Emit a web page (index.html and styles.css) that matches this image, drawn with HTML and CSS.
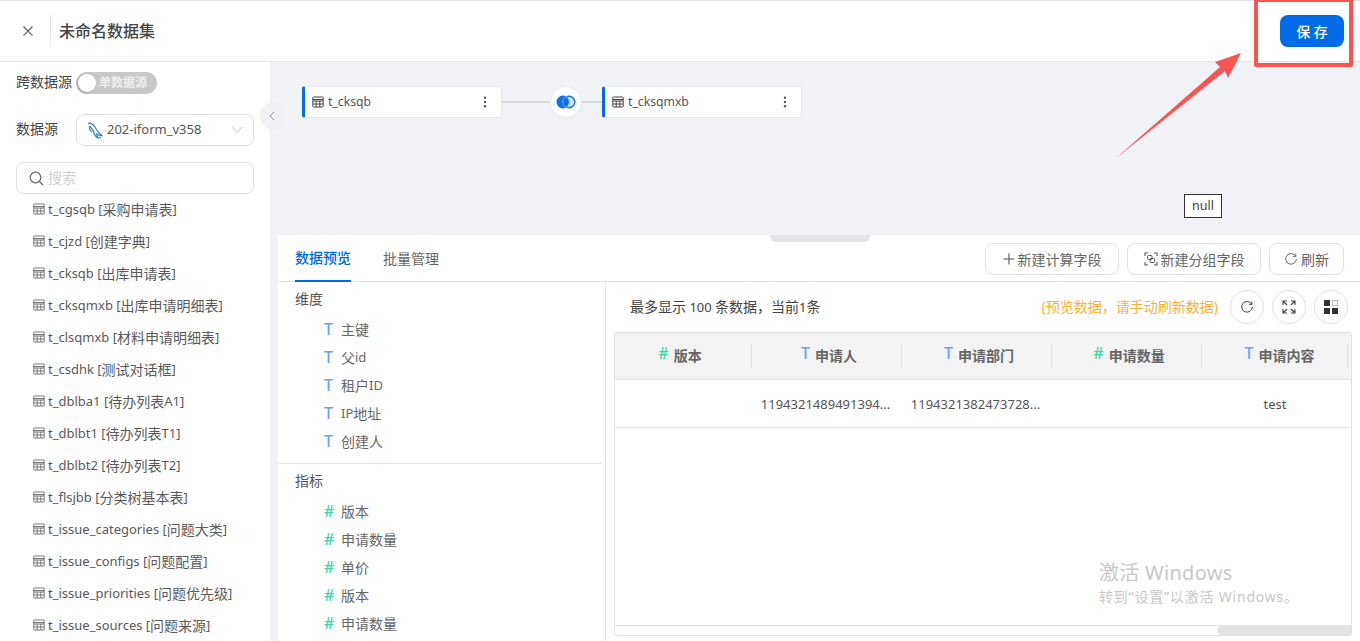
FILE: index.html
```html
<!DOCTYPE html>
<html lang="en">

<head>
    <meta charset="UTF-8" />
    <meta name="viewport" content="width=device-width, initial-scale=1.0" />
    <title>未命名数据集</title>
    <link rel="stylesheet" href="styles.css">
</head>

<body>
    <svg width="0" height="0" class="defs">
        <symbol id="tbl" viewBox="0 0 12 12">
            <path d="M1.500 1h9a.7.7 0 0 1 .7.7v8.600a.7.7 0 0 1-.7.7h-9a.7.7 0 0 1-.7-.7V1.700a.7.7 0 0 1 .7-.7zM1 3.500h10M1 5h10M1 8h10M4.200 5v6M7.800 5v6" fill="none" stroke="currentColor" stroke-width="1" />
        </symbol>
        <symbol id="dots" viewBox="0 0 4 14">
            <circle cx="2" cy="2" r="1.400" fill="currentColor" />
            <circle cx="2" cy="7" r="1.400" fill="currentColor" />
            <circle cx="2" cy="12" r="1.400" fill="currentColor" />
        </symbol>
        <symbol id="reload" viewBox="0 0 14 14">
            <path d="M11.600 4.200A5.300 5.300 0 1 0 12.300 7M11.800 1.500v2.900H8.900" fill="none" stroke="currentColor" stroke-width="1" />
        </symbol>
    </svg>

    <div class="app">
        <header class="top">
            <button class="close">
                <svg width="12" height="12" viewBox="0 0 12 12">
                    <path d="M1.500 1.500l9 9M10.500 1.500l-9 9" stroke="#666" stroke-width="1.100" fill="none" />
                </svg>
            </button>
            <h1 class="title">未命名数据集</h1>
            <button class="save">保 存</button>
        </header>

        <div class="body">
            <aside class="side">
                <div class="side-row row-cross">
                    <span class="side-label">跨数据源</span>
                    <span class="switch"><i class="knob"></i>单数据源</span>
                </div>
                <div class="side-row row-source">
                    <span class="side-label label-source">数据源</span>
                    <div class="select">
                        <svg class="dolphin" width="17" height="17" viewBox="0 0 16 16">
                            <path d="M1 1c3.500 0 6 2 7.300 5 1 2.200 2.500 4.800 6.200 7.200-2.200-.3-4-.9-5.300-2 .1 1.400.5 2.700 1.100 3.800-2.400-1.400-3.500-3.200-4-5.600C5.800 6.500 3.200 5.300 2.300 3.800" fill="none" stroke="#2a7cc0" stroke-width="1.100" />
                            <path d="M2.300 3.800C2 6 2.800 8 4.500 9.500M11.500 14l1.500 1" fill="none" stroke="#2a7cc0" stroke-width="1" />
                        </svg>
                        <span class="en">202-iform_v358</span>
                        <svg class="caret" width="12" height="8" viewBox="0 0 12 8">
                            <path d="M1 1l5 5.500L11 1" fill="none" stroke="#ccc" stroke-width="1" />
                        </svg>
                    </div>
                </div>
                <div class="search">
                    <svg width="15" height="15" viewBox="0 0 15 15">
                        <circle cx="6.500" cy="6.500" r="5.300" fill="none" stroke="#666" stroke-width="1.200" />
                        <path d="M10.500 10.500l3.500 3.500" stroke="#666" stroke-width="1.200" />
                    </svg>
                    <span>搜索</span>
                </div>
                <ul class="tables">
                    <li><svg><use href="#tbl" /></svg><span class="en">t_cgsqb [</span>采购申请表<span class="en">]</span></li>
                    <li><svg><use href="#tbl" /></svg><span class="en">t_cjzd [</span>创建字典<span class="en">]</span></li>
                    <li><svg><use href="#tbl" /></svg><span class="en">t_cksqb [</span>出库申请表<span class="en">]</span></li>
                    <li><svg><use href="#tbl" /></svg><span class="en">t_cksqmxb [</span>出库申请明细表<span class="en">]</span></li>
                    <li><svg><use href="#tbl" /></svg><span class="en">t_clsqmxb [</span>材料申请明细表<span class="en">]</span></li>
                    <li><svg><use href="#tbl" /></svg><span class="en">t_csdhk [</span>测试对话框<span class="en">]</span></li>
                    <li><svg><use href="#tbl" /></svg><span class="en">t_dblba1 [</span>待办列表<span class="en">A1]</span></li>
                    <li><svg><use href="#tbl" /></svg><span class="en">t_dblbt1 [</span>待办列表<span class="en">T1]</span></li>
                    <li><svg><use href="#tbl" /></svg><span class="en">t_dblbt2 [</span>待办列表<span class="en">T2]</span></li>
                    <li><svg><use href="#tbl" /></svg><span class="en">t_flsjbb [</span>分类树基本表<span class="en">]</span></li>
                    <li><svg><use href="#tbl" /></svg><span class="en">t_issue_categories [</span>问题大类<span class="en">]</span></li>
                    <li><svg><use href="#tbl" /></svg><span class="en">t_issue_configs [</span>问题配置<span class="en">]</span></li>
                    <li><svg><use href="#tbl" /></svg><span class="en">t_issue_priorities [</span>问题优先级<span class="en">]</span></li>
                    <li><svg><use href="#tbl" /></svg><span class="en">t_issue_sources [</span>问题来源<span class="en">]</span></li>
                </ul>
            </aside>

            <main class="main">
                <button class="fold">
                    <svg width="6" height="10" viewBox="0 0 6 10">
                        <path d="M5 1L1 5l4 4" fill="none" stroke="#888" stroke-width="1" />
                    </svg>
                </button>

                <section class="canvas">
                    <div class="node">
                        <svg class="node-icon"><use href="#tbl" /></svg>
                        <span class="node-name">t_cksqb</span>
                        <svg class="node-more"><use href="#dots" /></svg>
                    </div>
                    <i class="link link-a"></i>
                    <span class="join">
                        <svg width="20" height="16" viewBox="0 0 20 16">
                            <circle cx="13" cy="8" r="5.800" fill="#d6e6fb" stroke="#0f6fe6" stroke-width="1.400" />
                            <circle cx="7" cy="8" r="6.500" fill="#0f6fe6" />
                            <path d="M10 2.300a6.500 6.500 0 0 0 0 11.400" fill="none" stroke="#7fb2f2" stroke-width=".8" />
                            <path d="M10 2.300a6.500 6.500 0 0 1 0 11.400" fill="none" stroke="#b5d2f8" stroke-width=".8" />
                        </svg>
                    </span>
                    <i class="link link-b"></i>
                    <div class="node">
                        <svg class="node-icon"><use href="#tbl" /></svg>
                        <span class="node-name">t_cksqmxb</span>
                        <svg class="node-more"><use href="#dots" /></svg>
                    </div>
                    <span class="null-tip">null</span>
                </section>

                <section class="panel">
                    <i class="drag"></i>
                    <div class="tabbar">
                        <a class="tab active">数据预览</a>
                        <a class="tab">批量管理</a>
                        <div class="actions">
                            <button class="btn btn-wide">
                                <svg width="12" height="12" viewBox="0 0 12 12">
                                    <path d="M6 .5v11M.5 6h11" stroke="#555" stroke-width="1.100" />
                                </svg>新建计算字段
                            </button>
                            <button class="btn btn-wide">
                                <svg width="14" height="14" viewBox="0 0 14 14">
                                    <path d="M1 4V1h3M10 1h3v3M13 10v3h-3M4 13H1v-3" fill="none" stroke="#555" stroke-width="1.100" />
                                    <rect x="3.500" y="3.500" width="4.500" height="4" rx="1" fill="none" stroke="#555" />
                                    <rect x="6" y="6.500" width="4.500" height="4" rx="1" fill="none" stroke="#555" />
                                </svg>新建分组字段
                            </button>
                            <button class="btn btn-small">
                                <svg width="14" height="14"><use href="#reload" /></svg>刷新
                            </button>
                        </div>
                    </div>

                    <div class="panel-body">
                        <div class="fields">
                            <div class="group">
                                <h3 class="group-title">维度</h3>
                                <div class="field"><b class="t">T</b>主键</div>
                                <div class="field"><b class="t">T</b>父<span class="en">id</span></div>
                                <div class="field"><b class="t">T</b>租户<span class="en">ID</span></div>
                                <div class="field"><b class="t">T</b><span class="en">IP</span>地址</div>
                                <div class="field"><b class="t">T</b>创建人</div>
                            </div>
                            <div class="group group-last">
                                <h3 class="group-title">指标</h3>
                                <div class="field"><b class="n">#</b>版本</div>
                                <div class="field"><b class="n">#</b>申请数量</div>
                                <div class="field"><b class="n">#</b>单价</div>
                                <div class="field"><b class="n">#</b>版本</div>
                                <div class="field"><b class="n">#</b>申请数量</div>
                            </div>
                        </div>

                        <div class="preview">
                            <div class="preview-bar">
                                <span class="count">最多显示<span class="en"> 100 </span>条数据，当前<span class="en">1</span>条</span>
                                <span class="hint">(预览数据，请手动刷新数据)</span>
                                <button class="round">
                                    <svg width="14" height="14"><use href="#reload" /></svg>
                                </button>
                                <button class="round">
                                    <svg width="14" height="14" viewBox="0 0 14 14">
                                        <path d="M1 5V1h4M9 1h4v4M13 9v4H9M5 13H1V9M1 1l4 4M13 1L9 5M13 13L9 9M1 13l4-4" fill="none" stroke="#444" stroke-width="1.100" />
                                    </svg>
                                </button>
                                <button class="round">
                                    <svg width="14" height="14" viewBox="0 0 14 14">
                                        <path d="M0 0h6v6H0zM0 8h6v6H0zM8 8h6v6H8z" fill="#333" />
                                        <path d="M8.500.5h5v5h-5z" fill="none" stroke="#777" stroke-dasharray="1 1" />
                                    </svg>
                                </button>
                            </div>

                            <div class="table">
                                <div class="thead">
                                    <div class="th first"><b class="n">#</b>版本</div>
                                    <div class="th"><b class="t">T</b>申请人</div>
                                    <div class="th"><b class="t">T</b>申请部门</div>
                                    <div class="th"><b class="n">#</b>申请数量</div>
                                    <div class="th last"><b class="t">T</b>申请内容</div>
                                </div>
                                <div class="trow">
                                    <div class="td first"></div>
                                    <div class="td en">1194321489491394...</div>
                                    <div class="td en">1194321382473728...</div>
                                    <div class="td"></div>
                                    <div class="td last en">test</div>
                                </div>
                                <div class="tspace"></div>
                                <div class="tscroll"><i class="thumb"></i></div>
                            </div>
                        </div>
                    </div>
                </section>
            </main>
        </div>
    </div>

    <!-- annotation drawn on top of the screenshot -->
    <div class="mark-box"></div>
    <svg class="mark-arrow" width="130" height="110" viewBox="1115 52 130 110">
        <path d="M1115 159L1220 67L1215 62L1241 53L1228 78L1225 71Z" fill="#f95454" />
    </svg>

    <div class="watermark">
        <p class="wm-big">激活 Windows</p>
        <p class="wm-small">转到“设置”以激活 Windows。</p>
    </div>
</body>

</html>
```

FILE: styles.css
```css
* {
    margin: 0;
    padding: 0;
    box-sizing: border-box;
}

html,
body {
    height: 100%;
    overflow: hidden;
}

body {
    position: relative;
    font-family: "Noto Sans", "Noto Sans CJK SC", sans-serif;
    font-size: 14px;
    color: #555;
    background: #fff;
}

button {
    font-family: inherit;
    background: none;
    border: 0;
}

ul {
    list-style: none;
}

.defs {
    position: absolute;
}

/* latin runs are a bit smaller than the chinese next to them */
.en {
    font-size: 13px;
}

.app {
    display: flex;
    flex-direction: column;
    height: 641px;
    border-top: 1px solid #e4e4e7;
}

/* header */
.top {
    display: flex;
    align-items: center;
    flex: none;
    height: 61px;
    padding-right: 16px;
    border-bottom: 1px solid #e4e5e8;
}

.close {
    display: flex;
    align-items: center;
    justify-content: center;
    width: 51px;
    height: 32px;
    padding-left: 6px;
    border-right: 1px solid #e6e6e6;
}

.title {
    flex: 1;
    margin: -2px 0 0 8px;
    font-size: 16px;
    font-weight: 500;
    color: #444;
}

.save {
    width: 64px;
    height: 32px;
    border-radius: 8px;
    background: #006be6;
    color: #fff;
    font-size: 14px;
    font-weight: 500;
}

.body {
    display: flex;
    flex: 1;
    min-height: 0;
}

/* left side */
.side {
    flex: none;
    width: 270px;
    padding: 0 16px;
    overflow: hidden;
    background: #fff;
}

.side-row {
    display: flex;
    align-items: center;
}

.row-cross {
    height: 42px;
}

.row-cross .side-label {
    margin-top: -5px;
}

.row-source {
    height: 32px;
    margin-top: 10px;
}

.side-label {
    width: 60px;
    color: #444;
}

.label-source {
    margin-top: -5px;
}

.switch {
    display: flex;
    align-items: center;
    width: 81px;
    height: 22px;
    padding: 0 0 2px 2px;
    border-radius: 11px;
    background: #c8c8c8;
    color: #f0f0f0;
    font-size: 12px;
    font-weight: 700;
}

.knob {
    width: 18px;
    height: 18px;
    margin: 2px 3px 0 0;
    border-radius: 50%;
    background: #fff;
    box-shadow: -1px 1px 2px rgba(0, 0, 0, .2);
}

.select {
    display: flex;
    align-items: center;
    width: 178px;
    height: 32px;
    padding: 0 10px 0 10px;
    border: 1px solid #e2e2e4;
    border-radius: 8px;
    color: #555;
}

.select span {
    flex: 1;
    margin: -2px 0 0 3px;
}

.search {
    display: flex;
    align-items: center;
    height: 32px;
    margin-top: 16px;
    padding-left: 12px;
    border: 1px solid #e2e2e4;
    border-radius: 8px;
    color: #cfcfcf;
}

.search span {
    margin: -2px 0 0 4px;
}

.tables {
    margin-top: -1px;
    padding-left: 17px;
}

.tables li {
    display: flex;
    align-items: center;
    height: 32px;
    padding-bottom: 1px;
    white-space: pre;
    color: #5a5a5a;
}

.tables svg {
    flex: none;
    width: 12px;
    height: 12px;
    margin-right: 3px;
    color: #777;
}

/* main */
.main {
    position: relative;
    display: flex;
    flex-direction: column;
    flex: 1;
    min-width: 0;
    padding-left: 8px;
    background: #f0f2f6;
}

.fold {
    position: absolute;
    left: -10px;
    top: 40px;
    display: flex;
    align-items: center;
    justify-content: center;
    width: 24px;
    height: 28px;
    border-radius: 14px 0 0 14px;
    background: #eef0f3;
}

.canvas {
    position: relative;
    display: flex;
    align-items: flex-start;
    flex: none;
    height: 173px;
    padding: 24px 0 0 24px;
}

.node {
    display: flex;
    align-items: center;
    width: 200px;
    height: 32px;
    padding: 0 14px 0 7px;
    border: 1px solid #e4e5e8;
    border-left: 3px solid #006be6;
    border-radius: 3px;
    background: #fff;
}

.node-icon {
    width: 12px;
    height: 12px;
    margin-right: 4px;
    color: #444;
}

.node-name {
    flex: 1;
    margin-top: -1px;
    font-size: 12.200px;
    color: #555;
}

.node-more {
    width: 4px;
    height: 12px;
    color: #555;
}

.link {
    flex: none;
    height: 2px;
    margin-top: 15px;
    background: #d9dbdf;
}

.link-a {
    width: 48px;
}

.link-b {
    width: 20px;
}

.join {
    display: flex;
    align-items: center;
    justify-content: center;
    flex: none;
    width: 32px;
    height: 32px;
    border: 1px solid #e8e9ec;
    border-radius: 50%;
    background: #fff;
}

.null-tip {
    position: absolute;
    left: 906px;
    top: 132px;
    width: 38px;
    height: 24px;
    border: 1px solid #333;
    background: #fff;
    text-align: center;
    line-height: 22px;
    font-size: 12.500px;
    color: #444;
}

.panel {
    position: relative;
    display: flex;
    flex-direction: column;
    flex: 1;
    min-height: 0;
    background: #fff;
}

.drag {
    position: absolute;
    left: 492px;
    top: 0;
    width: 100px;
    height: 7px;
    border-radius: 0 0 6px 6px;
    background: #e2e3e6;
}

.tabbar {
    display: flex;
    align-items: stretch;
    flex: none;
    height: 47px;
    padding: 0 16px 0 17px;
    border-bottom: 1px solid #e5e5e7;
}

.tab {
    display: flex;
    align-items: center;
    height: 47px;
    margin-right: 32px;
    padding-bottom: 2px;
    color: #666;
}

.tab.active {
    color: #006be6;
    font-weight: 500;
    border-bottom: 2px solid #006be6;
}

.actions {
    display: flex;
    gap: 8px;
    margin-left: auto;
    padding-top: 8px;
}

.btn {
    display: flex;
    align-items: center;
    justify-content: center;
    gap: 3px;
    height: 32px;
    padding-bottom: 1px;
    border: 1px solid #e2e2e4;
    border-radius: 8px;
    font-size: 14px;
    color: #666;
}

.btn-wide {
    width: 134px;
}

.btn-small {
    width: 75px;
}

.panel-body {
    display: flex;
    flex: 1;
    min-height: 0;
}

.fields {
    flex: none;
    width: 328px;
    padding-right: 3px;
    border-right: 1px solid #e5e5e7;
    overflow: hidden;
}

.group {
    height: 182px;
    padding: 8px 0 0 17px;
    border-bottom: 1px solid #e5e5e7;
}

.group-last {
    border-bottom: 0;
}

.group-title {
    height: 22px;
    margin-bottom: 3px;
    font-size: 14px;
    font-weight: 400;
    color: #555;
    line-height: 18px;
}

.field {
    display: flex;
    align-items: center;
    height: 28px;
    padding-left: 29px;
    white-space: pre;
    color: #666;
}

.field b {
    width: 17px;
}

.t,
.n {
    font-size: 16px;
    font-weight: 500;
}

.t {
    color: #6aa5ee;
}

.n {
    color: #3fd6a6;
}

.preview {
    flex: 1;
    min-width: 0;
    padding: 8px 8px 0 8px;
}

.preview-bar {
    display: flex;
    align-items: center;
    height: 34px;
    padding: 0 4px 0 16px;
    gap: 8px;
}

.count {
    flex: 1;
    margin-top: -2px;
    white-space: pre;
    color: #444;
}

.hint {
    margin: -2px 4px 0 0;
    color: #f7b23e;
}

.round {
    display: flex;
    align-items: center;
    justify-content: center;
    width: 34px;
    height: 34px;
    border: 1px solid #e4e4e6;
    border-radius: 50%;
    color: #444;
}

.table {
    display: flex;
    flex-direction: column;
    width: 738px;
    height: 304px;
    margin-top: 8px;
    border: 1px solid #e2e2e4;
    border-radius: 3px;
}

.thead {
    display: flex;
    align-items: center;
    flex: none;
    height: 47px;
    background: #f3f3f3;
    border-bottom: 1px solid #e4e4e6;
}

.th {
    display: flex;
    align-items: center;
    justify-content: center;
    width: 150px;
    height: 24px;
    gap: 5px;
    padding: 0 0 3px 5px;
    border-right: 1px solid #dfdfe1;
    font-weight: 700;
    color: #666;
}

.th b {
    position: relative;
    top: -2px;
}

.th.first,
.td.first {
    width: 137px;
}

.th.first {
    padding: 0 6px 3px 0;
}

.th.last,
.td.last {
    width: 146px;
}

.th.last {
    padding-left: 10px;
}

.trow {
    display: flex;
    align-items: center;
    flex: none;
    height: 48px;
    border-bottom: 1px solid #e4e4e6;
}

.td {
    width: 150px;
    padding-right: 3px;
    text-align: center;
    color: #555;
    white-space: nowrap;
}

.td.last {
    padding: 0;
}

.tspace {
    flex: 1;
}

.tscroll {
    display: flex;
    justify-content: flex-end;
    flex: none;
    height: 10px;
    border-top: 1px solid #e4e4e6;
}

.thumb {
    width: 134px;
    border-radius: 5px 0 0 5px;
    background: #e3e3e5;
}

/* annotation */
.mark-box {
    position: absolute;
    left: 1254px;
    top: -2px;
    width: 99px;
    height: 69px;
    border: 4px solid #f95454;
    border-radius: 2px;
}

.mark-arrow {
    position: absolute;
    left: 1115px;
    top: 52px;
}

.watermark {
    position: absolute;
    left: 1099px;
    top: 559px;
    color: #c8c8c8;
    pointer-events: none;
}

.wm-big {
    font-size: 20px;
    line-height: 28px;
    letter-spacing: .3px;
}

.wm-small {
    font-size: 14px;
    line-height: 20px;
    letter-spacing: .8px;
}
```
